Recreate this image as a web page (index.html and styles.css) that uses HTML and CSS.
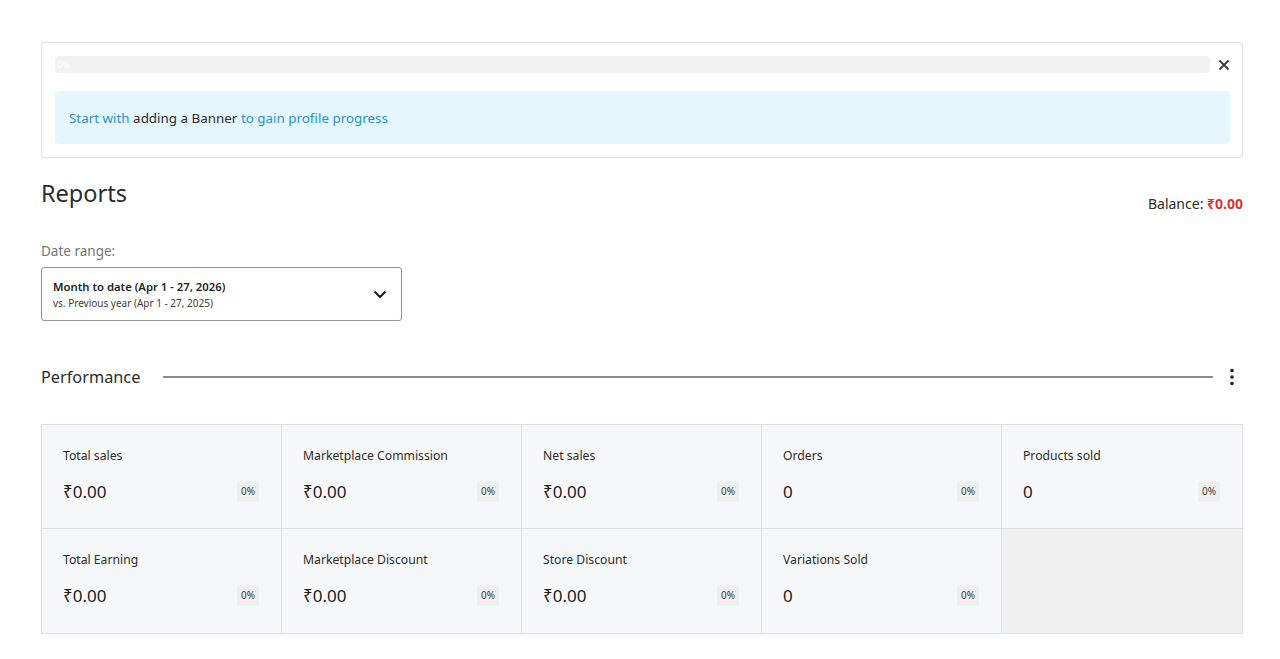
FILE: index.html
```html
<!DOCTYPE html>
<html lang="en">
<head>
  <meta charset="UTF-8" />
  <meta name="viewport" content="width=device-width, initial-scale=1" />
  <title>Reports</title>
  <link rel="stylesheet" href="styles.css">
</head>
<body>

<div class="page">
  <div class="progress-card">
    <div class="progress-row">
      <div class="progress-bar"><span>0%</span></div>
      <button class="close-btn" aria-label="Close">
        <svg width="12" height="12" viewBox="0 0 12 12"><path d="M1.5 1.5l9 9M10.5 1.5l-9 9" stroke="#3c3c3c" stroke-width="1.8" fill="none"/></svg>
      </button>
    </div>
    <div class="notice">
      <a href="#">Start with</a> adding a Banner <a href="#">to gain profile progress</a>
    </div>
  </div>

  <div class="reports-head">
    <h1>Reports</h1>
    <div class="balance">Balance: <strong>₹0.00</strong></div>
  </div>

  <div class="date-range">
    <label>Date range:</label>
    <button class="date-select">
      <span class="date-text">
        <span class="date-main">Month to date (Apr 1 - 27, 2026)</span>
        <span class="date-sub">vs. Previous year (Apr 1 - 27, 2025)</span>
      </span>
      <svg width="14" height="9" viewBox="0 0 14 9"><path d="M1.5 1.5l5.5 5.5 5.5-5.5" stroke="#1e1e1e" stroke-width="2" fill="none"/></svg>
    </button>
  </div>

  <div class="section-head">
    <h2>Performance</h2>
    <hr class="section-line">
    <button class="kebab" aria-label="More">
      <svg width="4" height="18" viewBox="0 0 4 18"><circle cx="2" cy="2.5" r="1.8" fill="#1e1e1e"/><circle cx="2" cy="9" r="1.8" fill="#1e1e1e"/><circle cx="2" cy="15.5" r="1.8" fill="#1e1e1e"/></svg>
    </button>
  </div>

  <div class="summary">
    <div class="summary-item">
      <div class="item-label">Total sales</div>
      <div class="item-data"><span class="item-value">₹0.00</span><span class="delta">0%</span></div>
    </div>
    <div class="summary-item">
      <div class="item-label">Marketplace Commission</div>
      <div class="item-data"><span class="item-value">₹0.00</span><span class="delta">0%</span></div>
    </div>
    <div class="summary-item">
      <div class="item-label">Net sales</div>
      <div class="item-data"><span class="item-value">₹0.00</span><span class="delta">0%</span></div>
    </div>
    <div class="summary-item">
      <div class="item-label">Orders</div>
      <div class="item-data"><span class="item-value">0</span><span class="delta">0%</span></div>
    </div>
    <div class="summary-item">
      <div class="item-label">Products sold</div>
      <div class="item-data"><span class="item-value">0</span><span class="delta">0%</span></div>
    </div>
    <div class="summary-item">
      <div class="item-label">Total Earning</div>
      <div class="item-data"><span class="item-value">₹0.00</span><span class="delta">0%</span></div>
    </div>
    <div class="summary-item">
      <div class="item-label">Marketplace Discount</div>
      <div class="item-data"><span class="item-value">₹0.00</span><span class="delta">0%</span></div>
    </div>
    <div class="summary-item">
      <div class="item-label">Store Discount</div>
      <div class="item-data"><span class="item-value">₹0.00</span><span class="delta">0%</span></div>
    </div>
    <div class="summary-item">
      <div class="item-label">Variations Sold</div>
      <div class="item-data"><span class="item-value">0</span><span class="delta">0%</span></div>
    </div>
    <div class="summary-item empty"></div>
  </div>
</div>

</body>
</html>
```

FILE: styles.css
```css
body {
  font-family: "Noto Sans", "Open Sans", sans-serif;
  background: #fff;
  color: #1e1e1e;
  margin: 0;
}
.page {
  padding: 42px 37px 0 41px;
}
.progress-card {
  border: 1px solid #e2e2e2;
  border-radius: 3px;
  padding: 13px 12px 13px 13px;
}
.progress-row {
  display: flex;
  align-items: center;
  gap: 8px;
}
.progress-bar {
  flex: 1;
  height: 17px;
  background: #f2f2f2;
  border-radius: 4px;
  font-size: 9px;
  line-height: 17px;
  color: #fff;
  padding-left: 2px;
}
.close-btn {
  background: none;
  border: none;
  padding: 0;
  width: 12px;
  height: 17px;
  display: flex;
  align-items: center;
  justify-content: center;
  cursor: pointer;
}
.notice {
  margin-top: 18px;
  background: #e5f7fd;
  border-radius: 4px;
  height: 53px;
  display: flex;
  align-items: center;
  padding-left: 14px;
  font-size: 13.4px;
  color: #2c2c2c;
  white-space: pre;
}
.notice a {
  color: #2a8fcb;
  text-decoration: none;
}
.reports-head {
  display: flex;
  justify-content: space-between;
  margin-top: 18px;
}
.reports-head h1 {
  margin: 0;
  font-size: 23.5px;
  font-weight: 400;
  line-height: 34px;
  color: #2c2c2c;
}
.balance {
  margin-top: 18px;
  font-size: 14px;
  color: #2c2c2c;
}
.balance strong {
  color: #d63638;
}
.date-range {
  margin-top: 29px;
}
.date-range label {
  display: block;
  font-size: 13.5px;
  color: #757575;
  margin-bottom: 7px;
}
.date-select {
  width: 361px;
  height: 54px;
  display: flex;
  align-items: center;
  justify-content: space-between;
  background: #fff;
  border: 1px solid #949494;
  border-radius: 3px;
  padding: 0 14px 0 11px;
  font-family: inherit;
  text-align: left;
  cursor: pointer;
}
.date-text {
  display: flex;
  flex-direction: column;
  gap: 2px;
}
.date-main {
  font-size: 11.3px;
  font-weight: 600;
  color: #1e1e1e;
}
.date-sub {
  font-size: 10px;
  color: #3c3c3c;
}
.section-head {
  display: flex;
  align-items: center;
  margin-top: 41px;
  height: 30px;
}
.section-head h2 {
  margin: 0;
  font-size: 16.3px;
  font-weight: 400;
  color: #2c2c2c;
}
.section-line {
  flex: 1;
  border: none;
  border-top: 2px solid #8c8c8c;
  margin: 0 0 0 23px;
}
.kebab {
  background: none;
  border: none;
  padding: 0 9px 0 17px;
  display: flex;
  cursor: pointer;
}
.summary {
  display: grid;
  grid-template-columns: repeat(5, 1fr);
  margin-top: 32px;
  border: 1px solid #e0e0e0;
}
.summary-item {
  background: #f6f7f9;
  height: 104px;
  padding: 22px 22px 0 21px;
  box-sizing: border-box;
  border-right: 1px solid #e0e0e0;
  border-bottom: 1px solid #e0e0e0;
}
.summary-item:nth-child(5n) {
  border-right: none;
}
.summary-item:nth-child(n+6) {
  border-bottom: none;
}
.summary-item.empty {
  background: #f0f0f0;
}
.item-label {
  font-size: 12.2px;
  color: #2c2c2c;
  line-height: 18px;
}
.item-data {
  display: flex;
  justify-content: space-between;
  align-items: center;
  margin-top: 15px;
}
.item-value {
  font-size: 17px;
  color: #1e1e1e;
}
.delta {
  background: #efefef;
  border-radius: 2px;
  font-size: 10px;
  color: #3c3c3c;
  padding: 4px 4px;
  line-height: 13px;
}
```
